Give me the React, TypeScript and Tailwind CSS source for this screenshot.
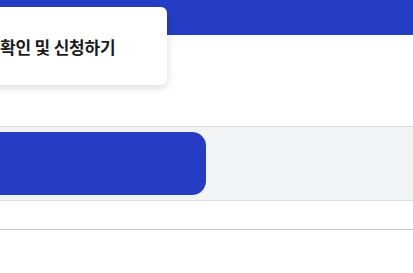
import React from "react";

export default function App() {
  return (
    <div
      className="w-[413px] h-[273px] bg-white overflow-hidden flex flex-col"
      style={{ fontFamily: '"Noto Sans CJK KR", "Noto Sans", sans-serif' }}
    >
      <div className="relative h-[126px] shrink-0">
        <div className="h-[35px] bg-[#253dc5]" />
        <div className="absolute left-[-20px] top-[7px] w-[187px] h-[78px] bg-white rounded-[6px] shadow-[0_3px_8px_rgba(0,0,0,0.14)] flex items-center pl-5 pt-[1px]">
          <span className="text-[17px] font-bold text-[#1b1b1b] tracking-[-0.2px] whitespace-nowrap">
            확인 및 신청하기
          </span>
        </div>
      </div>
      <div className="shrink-0 border-t border-b border-[#dcdee2] bg-[#f1f3f5] pt-[5px] pb-[5px]">
        <div className="ml-[-30px] w-[236px] h-[63px] rounded-[14px] bg-[#253dc5]" />
      </div>
      <div className="h-[28px] shrink-0" />
      <div className="border-t border-[#c4c6c8]" />
    </div>
  );
}
